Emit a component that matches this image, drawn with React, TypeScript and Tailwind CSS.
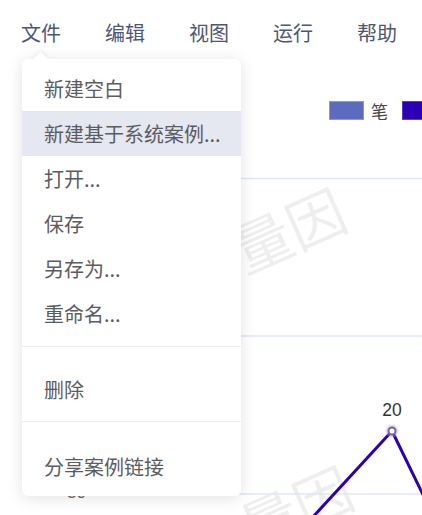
import React from "react";

const menuBar = ["文件", "编辑", "视图", "运行", "帮助"];
const group1 = ["新建空白", "新建基于系统案例...", "打开...", "保存", "另存为...", "重命名..."];

function Chart() {
  return (
    <svg width="422" height="455" viewBox="0 60 422 455" className="block">
      {/* watermarks */}
      <g transform="translate(288,228) rotate(-24)">
        <text x="0" y="0" fontSize="58" textAnchor="middle" dominantBaseline="central" fill="rgba(0,0,0,0.065)" fontFamily="'Noto Sans CJK SC', sans-serif">量因</text>
      </g>
      <g transform="translate(295,506) rotate(-24)">
        <text x="0" y="0" fontSize="58" textAnchor="middle" dominantBaseline="central" fill="rgba(0,0,0,0.065)" fontFamily="'Noto Sans CJK SC', sans-serif">量因</text>
      </g>
      {/* legend */}
      <rect x="329.5" y="101.5" width="34" height="18" fill="#5c6bc0" stroke="#8e98d6" strokeWidth="1" />
      <text x="371" y="110.5" fontSize="17" dominantBaseline="central" fill="#444" fontFamily="'Noto Sans CJK SC', sans-serif">笔</text>
      <rect x="402.5" y="101.5" width="34" height="18" fill="#2c00b4" stroke="#5a3ec8" strokeWidth="1" />
      {/* grid */}
      <line x1="60" y1="178.5" x2="422" y2="178.5" stroke="#e0e6f1" strokeWidth="1.5" />
      <line x1="60" y1="336" x2="422" y2="336" stroke="#e0e6f1" strokeWidth="1.5" />
      <line x1="60" y1="494" x2="422" y2="494" stroke="#e0e6f1" strokeWidth="1.5" />
      <text x="86" y="498" fontSize="17" textAnchor="end" fill="#666" fontFamily="'Liberation Sans', sans-serif">30</text>
      {/* series line */}
      <polyline points="300,531 392,431 430,509" fill="none" stroke="#2a00b5" strokeWidth="3" strokeLinejoin="round" />
      <circle cx="392" cy="431" r="6.5" fill="rgba(210,150,170,0.35)" />
      <circle cx="392" cy="431" r="3.5" fill="#fff" stroke="#6e65b8" strokeWidth="2" />
      <text x="392" y="416" fontSize="17.5" textAnchor="middle" fill="#333" fontFamily="'Liberation Sans', sans-serif">20</text>
    </svg>
  );
}

export default function App() {
  return (
    <div className="relative w-[422px] h-[515px] overflow-hidden bg-white font-['Noto_Sans_CJK_SC',sans-serif]">
      <div className="flex h-[60px] gap-[44px] pl-[21px] pt-[18px] text-[20px] leading-[30px] text-[#4d5775]">
        {menuBar.map((m) => (
          <span key={m}>{m}</span>
        ))}
      </div>
      <Chart />

      {/* dropdown */}
      <div className="absolute left-[22px] top-[59px] w-[219px] rounded-[6px] bg-white pt-[7px] pb-[7px] shadow-[0_2px_16px_rgba(0,0,0,0.12)]">
        <div className="absolute left-[13px] top-[-5px] h-[11px] w-[11px] rotate-45 bg-white shadow-[-2px_-2px_4px_rgba(0,0,0,0.05)]" />
        <div className="relative">
          {group1.map((t, i) => (
            <div
              key={t}
              className={`h-[45px] pl-[22px] text-[20px] leading-[45px] text-[#5b5c5f] ${i === 1 ? "bg-[#e5e8f1]" : ""}`}
            >
              {t}
            </div>
          ))}
        </div>
        <div className="mt-[10px] h-px bg-[#eeeff2]" />
        <div className="mt-[20px] h-[45px] pl-[22px] text-[20px] leading-[45px] text-[#5b5c5f]">删除</div>
        <div className="mt-[9px] h-px bg-[#eeeff2]" />
        <div className="mt-[22px] h-[45px] pl-[22px] text-[20px] leading-[45px] text-[#5b5c5f]">分享案例链接</div>
      </div>
    </div>
  );
}
